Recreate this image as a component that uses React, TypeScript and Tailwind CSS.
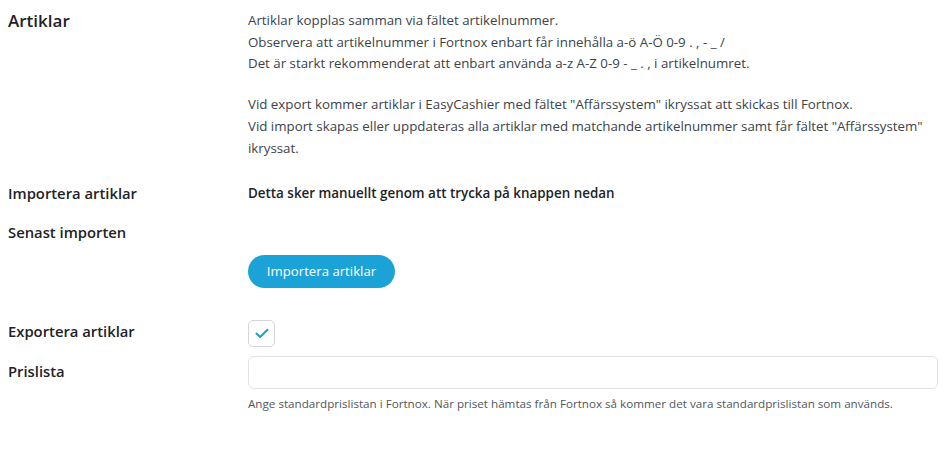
import React from "react";

const font = { fontFamily: '"Open Sans", "Noto Sans", sans-serif' };

export default function App() {
  return (
    <div className="w-[945px] h-[470px] bg-white text-[#3c434a] overflow-hidden" style={font}>
      <div className="flex pt-[9px]">
        <div className="w-[248px] shrink-0 pl-[8px]">
          <h2 className="text-[17px] font-semibold leading-[24px] text-[#1d2327]">Artiklar</h2>
        </div>
        <div className="flex-1 text-[13.3px] leading-[21.7px] pt-[1px] whitespace-nowrap">
          <div>Artiklar kopplas samman via fältet artikelnummer.</div>
          <div>Observera att artikelnummer i Fortnox enbart får innehålla a-ö A-Ö 0-9 . , - _ /</div>
          <div>Det är starkt rekommenderat att enbart använda a-z A-Z 0-9 - _ . , i artikelnumret.</div>
          <div className="h-[19px]" />
          <div>Vid export kommer artiklar i EasyCashier med fältet "Affärssystem" ikryssat att skickas till Fortnox.</div>
          <div>Vid import skapas eller uppdateras alla artiklar med matchande artikelnummer samt får fältet "Affärssystem"</div>
          <div>ikryssat.</div>
        </div>
      </div>

      <div className="flex items-center mt-[24px] leading-[20px]">
        <div className="w-[248px] shrink-0 pl-[8px] text-[14.8px] font-semibold text-[#1d2327]">Importera artiklar</div>
        <div className="text-[13.4px] font-semibold text-[#1d2327]">Detta sker manuellt genom att trycka på knappen nedan</div>
      </div>

      <div className="flex mt-[19px] leading-[20px]">
        <div className="w-[248px] shrink-0 pl-[8px] text-[14.8px] font-semibold text-[#1d2327]">Senast importen</div>
      </div>

      <div className="flex mt-[13px]">
        <div className="w-[248px] shrink-0" />
        <button className="h-[33px] w-[147px] rounded-full bg-[#1ba3d8] text-white text-[13.2px]">Importera artiklar</button>
      </div>

      <div className="flex items-start mt-[32px] leading-[20px]">
        <div className="w-[248px] shrink-0 pl-[8px] pt-[1px] text-[14.8px] font-semibold text-[#1d2327]">Exportera artiklar</div>
        <div className="w-[27px] h-[27px] rounded-[5px] border border-[#d5d5d5] flex items-center justify-center">
          <svg width="14" height="11" viewBox="0 0 14 11" fill="none">
            <path d="M1.5 5.5 L5.2 9 L12.5 1.8" stroke="#1b9fc7" strokeWidth="2" strokeLinecap="round" strokeLinejoin="round" />
          </svg>
        </div>
      </div>

      <div className="flex items-start mt-[9px] leading-[20px]">
        <div className="w-[248px] shrink-0 pl-[8px] pt-[5px] text-[14.8px] font-semibold text-[#1d2327]">Prislista</div>
        <div className="w-[690px] h-[33px] rounded-[6px] border border-[#e2e2e2]" />
      </div>

      <div className="flex mt-[6px]">
        <div className="w-[248px] shrink-0" />
        <div className="text-[11.65px] leading-[18px] text-[#50575e] whitespace-nowrap">Ange standardprislistan i Fortnox. När priset hämtas från Fortnox så kommer det vara standardprislistan som används.</div>
      </div>
    </div>
  );
}
